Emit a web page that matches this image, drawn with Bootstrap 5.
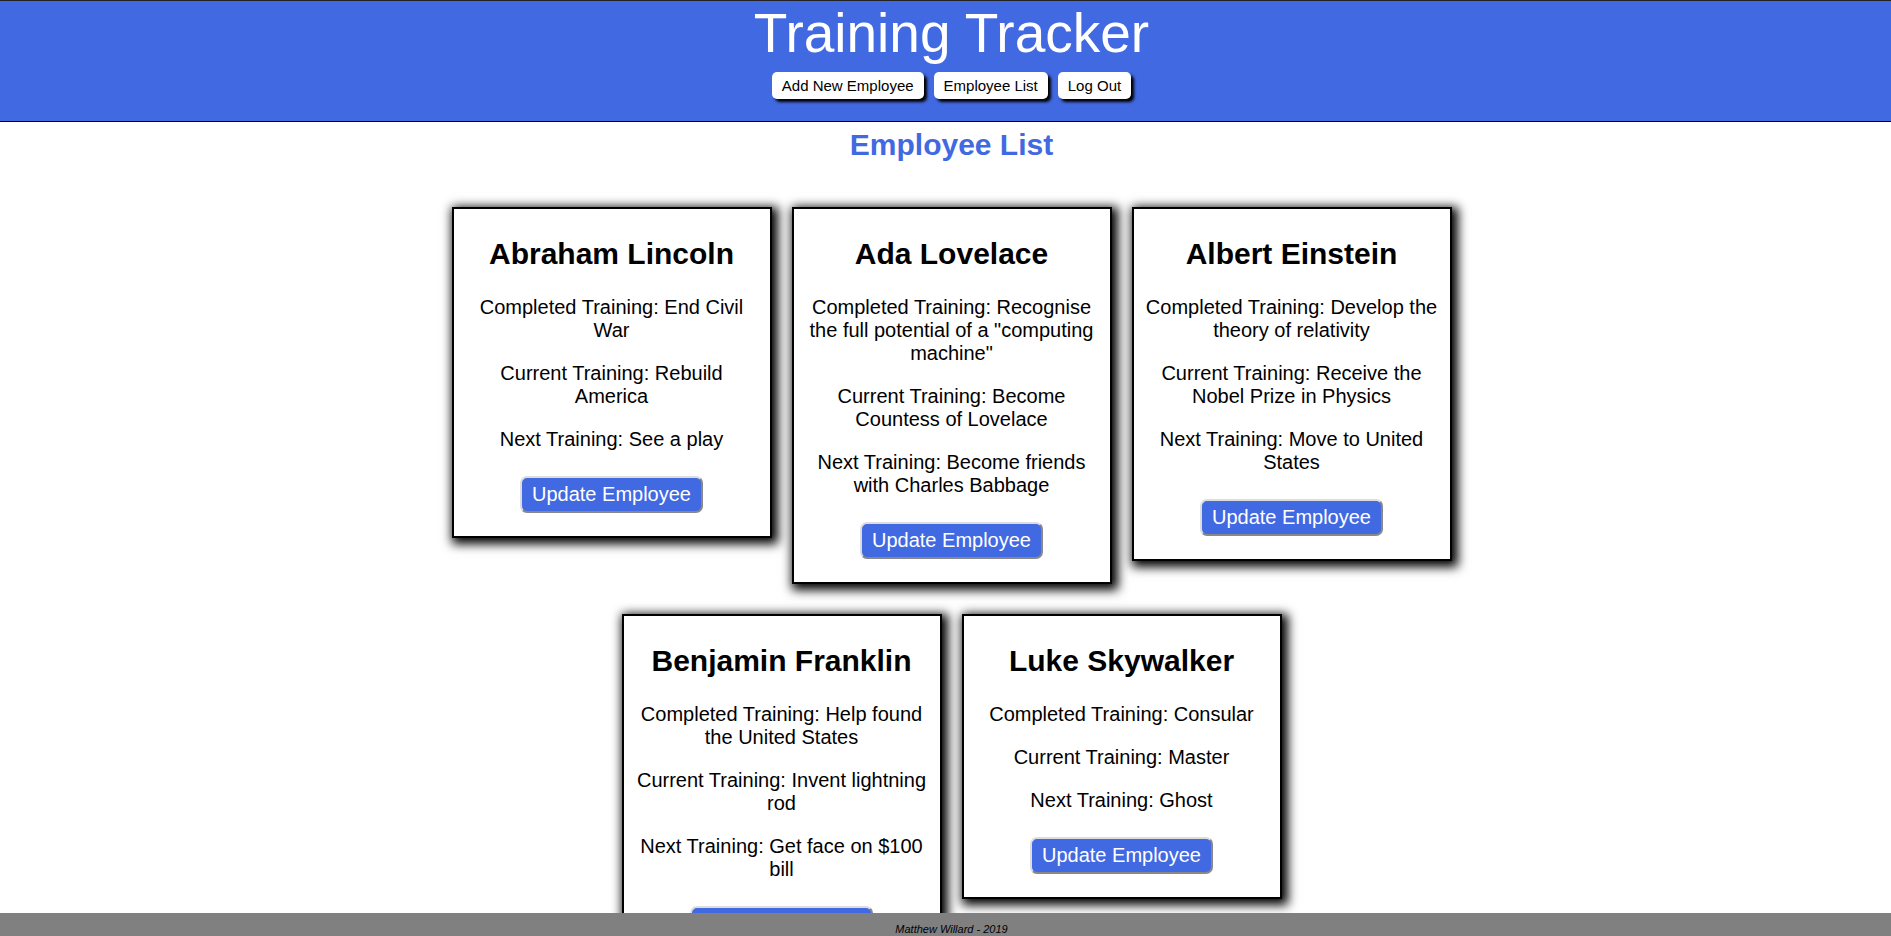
<!DOCTYPE html>
<html lang="en">
<head>
<meta charset="utf-8">
<meta name="viewport" content="width=device-width, initial-scale=1">
<title>Training Tracker</title>
<link href="https://cdn.jsdelivr.net/npm/bootstrap@5.3.0/dist/css/bootstrap.min.css" rel="stylesheet">
<style>
  :root { --royal: #4169e1; --page-inset: 12px; }
  body { font-family: "Liberation Sans", Arial, sans-serif; font-size: 20px; line-height: 23px; color: #000; background: #fff; }
  .site-header, .site-main, .site-footer { padding-left: var(--page-inset); }
  .site-header { background: var(--royal); border-top: 1px solid #222; border-bottom: 1px solid #000; padding-bottom: 22px; }
  .site-title { font-size: 55px; line-height: 64px; font-weight: 400; margin-bottom: 7px; }
  .site-nav { gap: 10px; }
  .nav-pill { font-size: 15px; line-height: 17px; padding: 5px 10px; color: #000; background: #fff; border-radius: 5px; box-shadow: 3px 3px 3px #000; text-decoration: none; }
  .page-heading { font-size: 30px; line-height: 34px; font-weight: 700; color: var(--royal); margin: 6px 0 45px; }
  .employee-list { max-width: 1020px; column-gap: 20px; row-gap: 30px; padding-bottom: 53px; }
  .employee { width: 320px; padding: 27px 10px 23px; background: #fff; border: 2px solid #000; border-radius: 0; box-shadow: 3px 3px 10px 3px #000; }
  .employee h2 { font-size: 30px; line-height: 35px; font-weight: 700; margin-bottom: 25px; }
  .employee p { margin-bottom: 20px; }
  .btn-update { font-size: 20px; line-height: 23px; color: #fff; background: var(--royal); border: 2px solid; border-color: #ddd #888 #888 #ddd; border-radius: 7px; padding: 5px 10px; margin-top: 5px; }
  .btn-update:hover { color: #fff; background: #3158cc; border-color: #888 #ddd #ddd #888; }
  .site-footer { background: gray; font-size: 11px; line-height: 13px; padding-top: 10px; }
</style>
</head>
<body>
<header class="site-header text-center">
  <h1 class="site-title text-white">Training Tracker</h1>
  <nav class="site-nav d-flex flex-wrap justify-content-center" aria-label="Main">
    <a class="nav-pill" href="#add">Add New Employee</a>
    <a class="nav-pill" href="#list">Employee List</a>
    <a class="nav-pill" href="#logout">Log Out</a>
  </nav>
</header>

<main class="site-main text-center" id="list">
  <h2 class="page-heading">Employee List</h2>
  <div class="employee-list d-flex flex-wrap justify-content-center align-items-start mx-auto">
    <article class="card employee">
      <h2>Abraham Lincoln</h2>
      <p>Completed Training: End Civil War</p>
      <p>Current Training: Rebuild America</p>
      <p>Next Training: See a play</p>
      <button type="button" class="btn btn-update align-self-center">Update Employee</button>
    </article>
    <article class="card employee">
      <h2>Ada Lovelace</h2>
      <p>Completed Training: Recognise the full potential of a "computing machine"</p>
      <p>Current Training: Become Countess of Lovelace</p>
      <p>Next Training: Become friends with Charles Babbage</p>
      <button type="button" class="btn btn-update align-self-center">Update Employee</button>
    </article>
    <article class="card employee">
      <h2>Albert Einstein</h2>
      <p>Completed Training: Develop the theory of relativity</p>
      <p>Current Training: Receive the Nobel Prize in Physics</p>
      <p>Next Training: Move to United States</p>
      <button type="button" class="btn btn-update align-self-center">Update Employee</button>
    </article>
    <article class="card employee">
      <h2>Benjamin Franklin</h2>
      <p>Completed Training: Help found the United States</p>
      <p>Current Training: Invent lightning rod</p>
      <p>Next Training: Get face on $100 bill</p>
      <button type="button" class="btn btn-update align-self-center">Update Employee</button>
    </article>
    <article class="card employee">
      <h2>Luke Skywalker</h2>
      <p>Completed Training: Consular</p>
      <p>Current Training: Master</p>
      <p>Next Training: Ghost</p>
      <button type="button" class="btn btn-update align-self-center">Update Employee</button>
    </article>
  </div>
</main>

<footer class="site-footer fixed-bottom text-center fst-italic">Matthew Willard - 2019</footer>
<script src="https://cdn.jsdelivr.net/npm/bootstrap@5.3.0/dist/js/bootstrap.bundle.min.js"></script>
</body>
</html>
